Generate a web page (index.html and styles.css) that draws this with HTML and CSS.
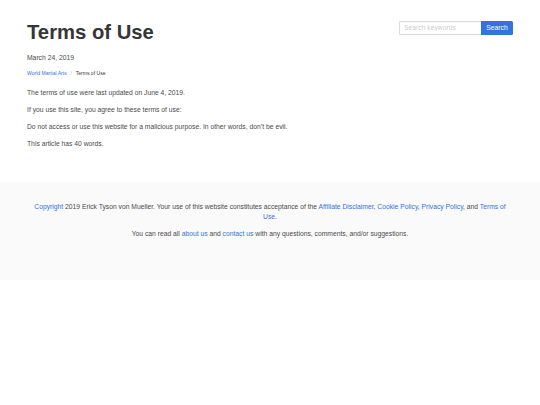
FILE: index.html
```html
<!DOCTYPE html>
<html lang="en">
<head>
<meta charset="utf-8">
<title>Terms of Use</title>
<link rel="stylesheet" href="styles.css">
</head>
<body>
<section class="section">
  <div class="head">
    <div class="head-main">
      <h1 class="title">Terms of Use</h1>
      <p class="date">March 24, 2019</p>
    </div>
    <form class="search">
      <input class="search-input" type="text" placeholder="Search keywords">
      <button class="search-btn" type="button">Search</button>
    </form>
  </div>
  <nav class="breadcrumb">
    <a class="crumb-link" href="#">World Martial Arts</a>
    <span class="crumb-sep">/</span>
    <span class="crumb-active">Terms of Use</span>
  </nav>
  <div class="content">
    <p>The terms of use were last updated on June 4, 2019.</p>
    <p>If you use this site, you agree to these terms of use:</p>
    <p>Do not access or use this website for a malicious purpose. In other words, don’t be evil.</p>
    <p>This article has 40 words.</p>
  </div>
</section>
<footer class="footer">
  <p><a href="#">Copyright</a> 2019 Erick Tyson von Mueller. Your use of this website constitutes acceptance of the <a href="#">Affiliate Disclaimer</a>, <a href="#">Cookie Policy</a>, <a href="#">Privacy Policy</a>, and <a href="#">Terms of Use</a>.</p>
  <p>You can read all <a href="#">about us</a> and <a href="#">contact us</a> with any questions, comments, and/or suggestions.</p>
</footer>
</body>
</html>
```

FILE: styles.css
```css
html, body {
  margin: 0;
  padding: 0;
  background: #fff;
}
body {
  font-family: "Liberation Sans", Arial, sans-serif;
  font-size: 6.75px;
  line-height: 1.5;
  color: #4a4a4a;
}
a {
  color: #3273dc;
  text-decoration: none;
}
.section {
  padding: 20.5px 27px 32.8px;
}
.head {
  display: flex;
  justify-content: space-between;
  align-items: flex-start;
}
.title {
  margin: 0 0 9.4px;
  font-size: 20.25px;
  line-height: 1.125;
  font-weight: 700;
  color: #363636;
}
.date {
  margin: 0;
  line-height: 10.125px;
}
.search {
  display: flex;
  margin: 0;
}
.search-input {
  box-sizing: border-box;
  width: 82px;
  height: 14.5px;
  margin: 0;
  padding: 0 4px;
  border: 1px solid #dbdbdb;
  border-right: 0;
  border-radius: 1.5px 0 0 1.5px;
  font-family: inherit;
  font-size: 6.75px;
  color: #363636;
  box-shadow: inset 0 0.5px 1px rgba(10,10,10,.05);
}
.search-input::placeholder {
  color: rgba(54,54,54,.3);
}
.search-btn {
  box-sizing: border-box;
  width: 32px;
  height: 14.5px;
  margin: 0;
  padding: 0;
  border: 0;
  border-radius: 0 1.5px 1.5px 0;
  background: #3273dc;
  color: #fff;
  font-family: inherit;
  font-size: 6.75px;
}
.breadcrumb {
  display: flex;
  align-items: center;
  margin: 7px 0 11px;
  font-size: 5.06px;
  line-height: 7.6px;
}
.crumb-sep {
  color: #b5b5b5;
  padding: 0 3.8px;
}
.crumb-active {
  color: #363636;
}
.content p {
  margin: 0 0 6.75px;
  line-height: 10.125px;
}
.content p:last-child {
  margin-bottom: 0;
}
.footer {
  background: #fafafa;
  padding: 20.25px 27px 40.5px;
  text-align: center;
}
.footer p {
  margin: 0 0 6.75px;
  line-height: 10.125px;
}
.footer p:last-child {
  margin-bottom: 0;
}
```
